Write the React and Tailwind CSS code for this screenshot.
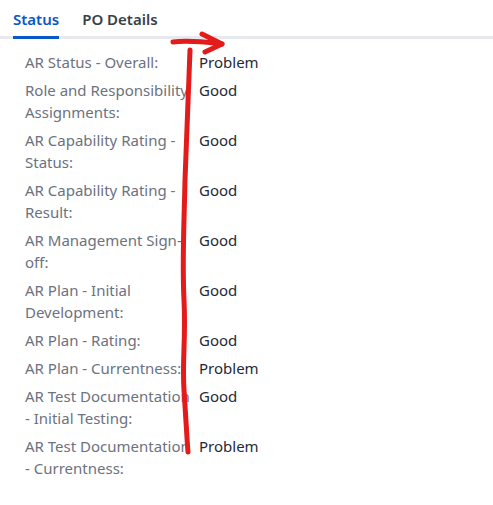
const rows = [
  ['AR Status - Overall:', 'Problem'],
  ['Role and Responsibility Assignments:', 'Good'],
  ['AR Capability Rating - Status:', 'Good'],
  ['AR Capability Rating - Result:', 'Good'],
  ['AR Management Sign-off:', 'Good'],
  ['AR Plan - Initial Development:', 'Good'],
  ['AR Plan - Rating:', 'Good'],
  ['AR Plan - Currentness:', 'Problem'],
  ['AR Test Documentation - Initial Testing:', 'Good'],
  ['AR Test Documentation - Currentness:', 'Problem'],
]

export default function App() {
  return (
    <div className="relative w-[493px] h-[505px] bg-white" style={{ fontFamily: '"Noto Sans", "Segoe UI", sans-serif' }}>
      <div className="flex pl-[13px] pt-[8px] border-b-[3px] border-[#e8e9ee]">
        <div className="text-[15px] font-semibold text-[#0a57c9] pb-[5px] border-b-[3px] border-[#0a57c9] -mb-[3px]">Status</div>
        <div className="text-[15px] font-semibold text-[#3a3f4a] pb-[5px] ml-[23px]">PO Details</div>
      </div>
      <div className="pt-[9px] pl-[25px]">
        {rows.map(([l, v]) => (
          <div key={l} className="flex pt-[3px] pb-[3px] text-[15px] leading-[22px]">
            <div className="w-[172px] text-[#6b7280]">{l}</div>
            <div className="ml-[2px] text-[#1f2937]">{v}</div>
          </div>
        ))}
      </div>
      <svg className="absolute inset-0 pointer-events-none" width="493" height="505">
        <g fill="none" stroke="#e31b1b" strokeWidth="5" strokeLinecap="round" strokeLinejoin="round">
          <path d="M173 42 C190 40 205 42 222 44" />
          <path d="M202 34 L222 44 L205 52" />
          <path d="M190 50 C188 100 186 150 185 180 C184 230 182 260 184 300 C186 340 182 360 184 390 C186 420 187 440 188 452" />
        </g>
      </svg>
    </div>
  )
}
